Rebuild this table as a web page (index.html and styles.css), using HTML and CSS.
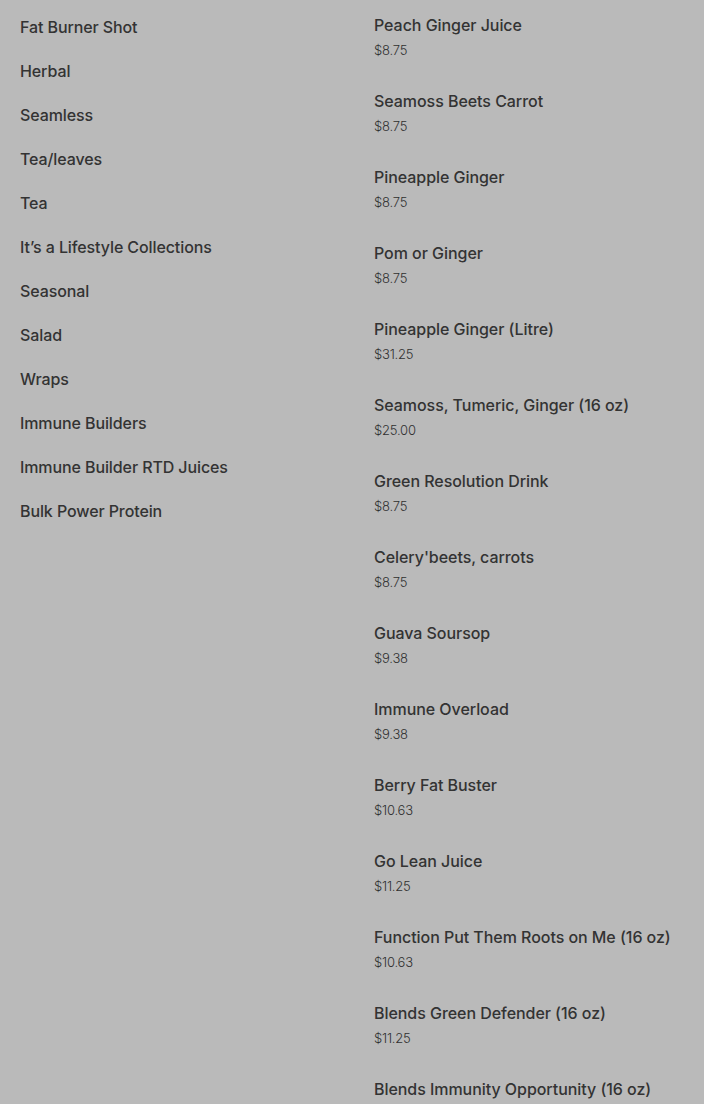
FILE: index.html
```html
<!DOCTYPE html>
<html>
<head>
<meta charset="utf-8">
<link rel="stylesheet" href="styles.css">
</head>
<body>
<div class="page">
  <nav class="cats">
    <a class="cat">Fat Burner Shot</a>
    <a class="cat">Herbal</a>
    <a class="cat">Seamless</a>
    <a class="cat">Tea/leaves</a>
    <a class="cat">Tea</a>
    <a class="cat">It’s a Lifestyle Collections</a>
    <a class="cat">Seasonal</a>
    <a class="cat">Salad</a>
    <a class="cat">Wraps</a>
    <a class="cat">Immune Builders</a>
    <a class="cat">Immune Builder RTD Juices</a>
    <a class="cat">Bulk Power Protein</a>
  </nav>
  <section class="items">
    <div class="item"><div class="name">Peach Ginger Juice</div><div class="price">$8.75</div></div>
    <div class="item"><div class="name">Seamoss Beets Carrot</div><div class="price">$8.75</div></div>
    <div class="item"><div class="name">Pineapple Ginger</div><div class="price">$8.75</div></div>
    <div class="item"><div class="name">Pom or Ginger</div><div class="price">$8.75</div></div>
    <div class="item"><div class="name">Pineapple Ginger (Litre)</div><div class="price">$31.25</div></div>
    <div class="item"><div class="name">Seamoss, Tumeric, Ginger (16 oz)</div><div class="price">$25.00</div></div>
    <div class="item"><div class="name">Green Resolution Drink</div><div class="price">$8.75</div></div>
    <div class="item"><div class="name">Celery'beets, carrots</div><div class="price">$8.75</div></div>
    <div class="item"><div class="name">Guava Soursop</div><div class="price">$9.38</div></div>
    <div class="item"><div class="name">Immune Overload</div><div class="price">$9.38</div></div>
    <div class="item"><div class="name">Berry Fat Buster</div><div class="price">$10.63</div></div>
    <div class="item"><div class="name">Go Lean Juice</div><div class="price">$11.25</div></div>
    <div class="item"><div class="name">Function Put Them Roots on Me (16 oz)</div><div class="price">$10.63</div></div>
    <div class="item"><div class="name">Blends Green Defender (16 oz)</div><div class="price">$11.25</div></div>
    <div class="item"><div class="name">Blends Immunity Opportunity (16 oz)</div><div class="price">$11.25</div></div>
  </section>
</div>
</body>
</html>
```
FILE: styles.css
```css
html, body {
  margin: 0;
  padding: 0;
  background: #bababa;
  height: 100%;
  overflow: hidden;
}
body {
  font-family: Inter, "Noto Sans", sans-serif;
  color: #333333;
}
.page {
  display: grid;
  grid-template-columns: 354px 1fr;
}
.cats {
  display: flex;
  flex-direction: column;
  padding: 5px 0 0 20px;
}
.cat {
  display: block;
  font-size: 16px;
  font-weight: 500;
  line-height: 20px;
  padding: 12px 0;
  color: #333333;
  letter-spacing: -0.1px;
}
.items {
  display: flex;
  flex-direction: column;
  padding-left: 20px;
}
.item {
  padding: 15px 0 16px;
}
.name {
  font-size: 16px;
  font-weight: 500;
  line-height: 20px;
  letter-spacing: -0.05px;
}
.price {
  margin-top: 5px;
  font-size: 13px;
  font-weight: 300;
  line-height: 20px;
  letter-spacing: -0.2px;
  color: #303030;
}
```
